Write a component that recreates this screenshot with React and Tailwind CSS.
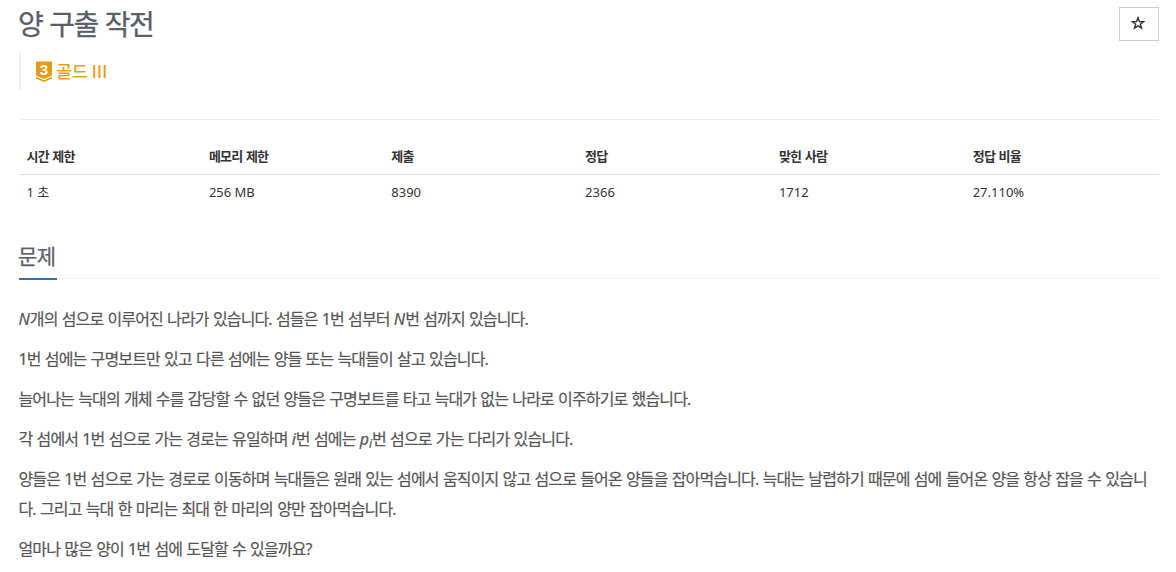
const stats = [
    { label: '시간 제한', value: '1 초', width: 'w-[16%]' },
    { label: '메모리 제한', value: '256 MB', width: 'w-[16%]' },
    { label: '제출', value: '8390', width: 'w-[17%]' },
    { label: '정답', value: '2366', width: 'w-[17%]' },
    { label: '맞힌 사람', value: '1712', width: 'w-[17%]' },
    { label: '정답 비율', value: '27.110%', width: 'w-[17%]' },
];

const TierBadge = () => (
    <svg width="16" height="21" viewBox="0 0 16 21" className="shrink-0">
        <path d="M0 0.5H16V14.5L8 18L0 14.5Z" fill="#e59b12" />
        <path d="M0 15.8L8 19.3L16 15.8V17.6L8 21L0 17.6Z" fill="#e59b12" />
        <text x="8" y="14" textAnchor="middle" fontSize="15" fontWeight="700" fill="#fff" className="font-['Liberation_Sans',sans-serif]">3</text>
    </svg>
);

// upright italic variables keep their natural spacing next to the tightened hangul
const Var = ({ children }) => <i className="tracking-normal">{children}</i>;

const ProblemHeader = () => (
    <header className="flex justify-between pt-[7px]">
        <div>
            <h1 className="-ml-px text-[28px] leading-[34px] tracking-[-1.5px] [word-spacing:1.2px] text-[#585f69] [-webkit-text-stroke:0.3px]">양 구출 작전</h1>
            <div className="mt-[11px] flex h-[38px] items-center gap-1 border-l-2 border-[#eee] pl-[15px] text-[17.5px] text-[#e59b12]">
                <TierBadge />
                <span className="pt-0.5 tracking-[-0.3px] [-webkit-text-stroke:0.2px]">골드 <span className="font-['Liberation_Sans',sans-serif] tracking-[0.3px]">III</span></span>
            </div>
        </div>
        <button className="flex h-[34px] w-[40px] items-center justify-center border border-[#ccc] pr-0.5 pb-0.5 text-[#333]">
            <svg width="14" height="14" viewBox="0 0 14 14" fill="none" stroke="currentColor" strokeWidth="1.4">
                <path d="M7 1.8L8.4 5.6L12.6 5.7L9.3 8.2L10.5 12.2L7 9.9L3.5 12.2L4.7 8.2L1.4 5.7L5.6 5.6Z" />
            </svg>
        </button>
    </header>
);

const StatsTable = () => (
    <table className="w-full table-fixed text-left text-[13px] leading-[18px] text-[#333]">
        <thead>
            <tr className="border-b border-[#ddd]">
                {stats.map((s) => (
                    <th key={s.label} className={`${s.width} px-[7.5px] pt-[7px] pb-[9px] font-bold tracking-[-0.75px] [word-spacing:0.75px]`}>{s.label}</th>
                ))}
            </tr>
        </thead>
        <tbody>
            <tr>
                {stats.map((s) => (
                    <td key={s.label} className="px-[7.5px] py-2">{s.value}</td>
                ))}
            </tr>
        </tbody>
    </table>
);

export default function App() {
    return (
        <main className="h-[572px] overflow-hidden bg-white pr-[17px] pl-[19px] font-['Noto_Sans','Noto_Sans_CJK_KR',sans-serif]">
            <ProblemHeader />
            <hr className="mt-[29px] border-[#eee]" />
            <div className="mt-5">
                <StatsTable />
            </div>

            {/* 문제 */}
            <section className="mt-[31px]">
                <div className="flex border-b border-dotted border-[#e4e9f0]">
                    <h2 className="-mb-[2px] w-[38px] border-b-2 border-[#3071b9] pb-[5px] -indent-px text-[21px] leading-[33px] tracking-[-0.5px] text-[#585f69] [-webkit-text-stroke:0.25px]">문제</h2>
                </div>
                <div className="mt-[25px] -ml-[0.5px] space-y-[10px] text-[16px] leading-[30px] tracking-[-0.85px] [word-spacing:0.85px] break-all text-[#555] [-webkit-text-stroke:0.2px]">
                    <p><Var>N</Var>개의 섬으로 이루어진 나라가 있습니다. 섬들은 1번 섬부터 <Var>N</Var>번 섬까지 있습니다.</p>
                    <p>1번 섬에는 구명보트만 있고 다른 섬에는 양들 또는 늑대들이 살고 있습니다.</p>
                    <p>늘어나는 늑대의 개체 수를 감당할 수 없던 양들은 구명보트를 타고 늑대가 없는 나라로 이주하기로 했습니다.</p>
                    <p>각 섬에서 1번 섬으로 가는 경로는 유일하며 <Var>i</Var>번 섬에는 <Var>p<sub>i</sub></Var>번 섬으로 가는 다리가 있습니다.</p>
                    <p>양들은 1번 섬으로 가는 경로로 이동하며 늑대들은 원래 있는 섬에서 움직이지 않고 섬으로 들어온 양들을 잡아먹습니다. 늑대는 날렵하기 때문에 섬에 들어온 양을 항상 잡을 수 있습니다. 그리고 늑대 한 마리는 최대 한 마리의 양만 잡아먹습니다.</p>
                    <p>얼마나 많은 양이 1번 섬에 도달할 수 있을까요?</p>
                </div>
            </section>
        </main>
    );
}
